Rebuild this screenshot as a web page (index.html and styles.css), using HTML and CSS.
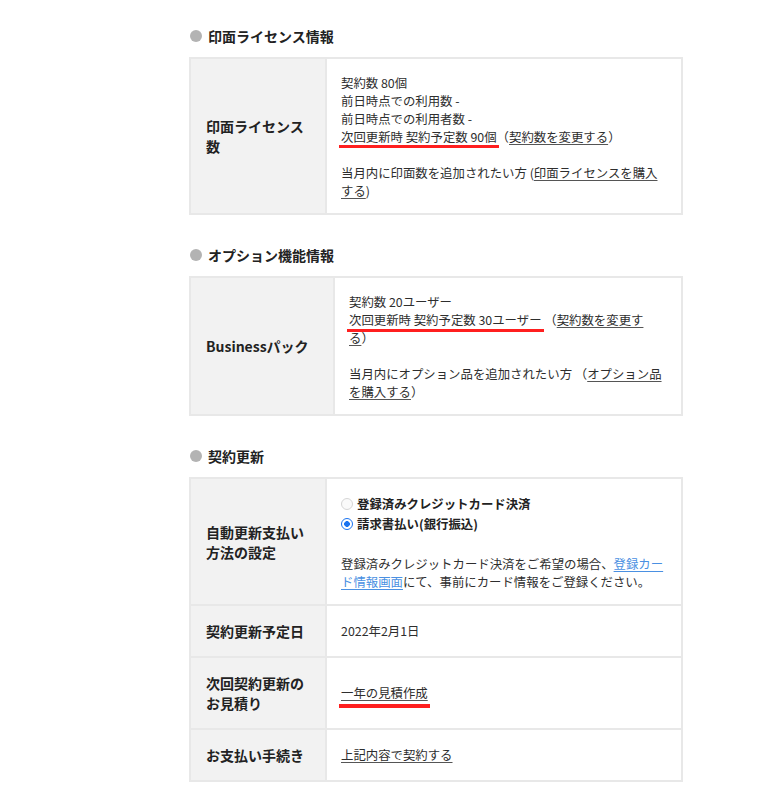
FILE: index.html
```html
<!DOCTYPE html>
<html lang="ja">
<head>
<meta charset="utf-8">
<title>契約情報</title>
<link rel="stylesheet" href="styles.css">
</head>
<body>
<main class="page">
  <section class="section">
    <h2 class="section-title"><span class="dot"></span>印面ライセンス情報</h2>
    <div class="info-table">
      <div class="row">
        <div class="label">印面ライセンス数</div>
        <div class="value">
          <p>契約数 80個<br>前日時点での利用数 -<br>前日時点での利用者数 -<br><span class="mark">次回更新時 契約予定数 90個</span>（<a href="#" class="link">契約数を変更する</a>）</p>
          <p class="gap">当月内に印面数を追加されたい方 (<a href="#" class="link">印面ライセンスを購入する</a>)</p>
        </div>
      </div>
    </div>
  </section>

  <section class="section">
    <h2 class="section-title"><span class="dot"></span>オプション機能情報</h2>
    <div class="info-table info-table--wide">
      <div class="row">
        <div class="label">Businessパック</div>
        <div class="value">
          <p>契約数 20ユーザー<br><span class="mark mark--mid">次回更新時 契約予定数 30ユーザー</span> （<a href="#" class="link">契約数を変更する</a>）</p>
          <p class="gap">当月内にオプション品を追加されたい方 （<a href="#" class="link">オプション品を購入する</a>）</p>
        </div>
      </div>
    </div>
  </section>

  <section class="section">
    <h2 class="section-title"><span class="dot"></span>契約更新</h2>
    <div class="info-table">
      <div class="row">
        <div class="label">自動更新支払い方法の設定</div>
        <div class="value">
          <div class="radios">
            <label class="radio-row"><input type="radio" name="pay" class="radio" disabled>登録済みクレジットカード決済</label>
            <label class="radio-row"><input type="radio" name="pay" class="radio" checked>請求書払い(銀行振込)</label>
          </div>
          <p class="note">登録済みクレジットカード決済をご希望の場合、<a href="#" class="link link--blue">登録カード情報画面</a>にて、事前にカード情報をご登録ください。</p>
        </div>
      </div>
      <div class="row">
        <div class="label">契約更新予定日</div>
        <div class="value value--center">2022年2月1日</div>
      </div>
      <div class="row">
        <div class="label">次回契約更新のお見積り</div>
        <div class="value value--center"><p><span class="mark mark--low"><a href="#" class="link">一年の見積作成</a></span></p></div>
      </div>
      <div class="row">
        <div class="label">お支払い手続き</div>
        <div class="value value--center"><p><a href="#" class="link">上記内容で契約する</a></p></div>
      </div>
    </div>
  </section>
</main>
</body>
</html>
```
FILE: styles.css
```css
* { box-sizing: border-box; }

body {
  margin: 0;
  background: #fff;
  color: #333;
  font-family: "Noto Sans CJK JP", "Noto Sans", sans-serif;
}

.page {
  width: 494px;
  margin-left: 189px;
  padding-top: 25px;
}

.section { margin-bottom: 29px; }

.section-title {
  display: flex;
  align-items: center;
  gap: 6px;
  height: 22px;
  margin: 0 0 10px;
  font-size: 14px;
  font-weight: 700;
  color: #222;
}

.dot {
  width: 12px;
  height: 12px;
  margin-left: 1px;
  border-radius: 50%;
  background: #b3b3b3;
}

.info-table { border: 2px solid #e8e8e8; }

.row {
  display: grid;
  grid-template-columns: 136px 1fr;
}
.info-table--wide .row { grid-template-columns: 144px 1fr; }

.row + .row { border-top: 2px solid #e8e8e8; }

.label {
  display: flex;
  align-items: center;
  padding: 15px;
  background: #f2f2f2;
  border-right: 2px solid #e8e8e8;
  font-size: 14px;
  line-height: 20px;
  font-weight: 700;
  color: #222;
}

.value {
  padding: 15px 14px 13px;
  font-size: 12.4px;
  line-height: 18px;
  color: #2e2e2e;
}
.value--center {
  display: flex;
  flex-direction: column;
  justify-content: center;
  padding: 14px;
}

.value p { margin: 0; }
.value p.gap { margin-top: 18px; }
.value p.note { margin-top: 21px; }

.link {
  color: #2e2e2e;
  text-decoration: underline;
  text-decoration-color: #555;
  text-underline-offset: 2px;
}
.link--blue {
  color: #4a90e2;
  text-decoration-color: #4a90e2;
}

.mark { position: relative; }
.mark::after {
  content: "";
  position: absolute;
  left: -2px;
  right: -2px;
  bottom: -2px;
  height: 3px;
  background: #ff1f1f;
}
.mark--mid::after { bottom: -3px; }
.mark--low::after { bottom: -6px; height: 4px; }

.radios {
  display: flex;
  flex-direction: column;
}

.radio-row {
  display: flex;
  align-items: center;
  height: 20px;
  font-weight: 700;
  color: #222;
}

.radio {
  appearance: none;
  -webkit-appearance: none;
  width: 12px;
  height: 12px;
  margin: 0 4px 0 0;
  border-radius: 50%;
  border: 1px solid #d6d6d6;
  background: #fafafa;
}
.radio:checked {
  border: 1.5px solid #1a73f0;
  background: radial-gradient(circle, #1a73f0 0 2.6px, #fff 3.1px);
}
```
